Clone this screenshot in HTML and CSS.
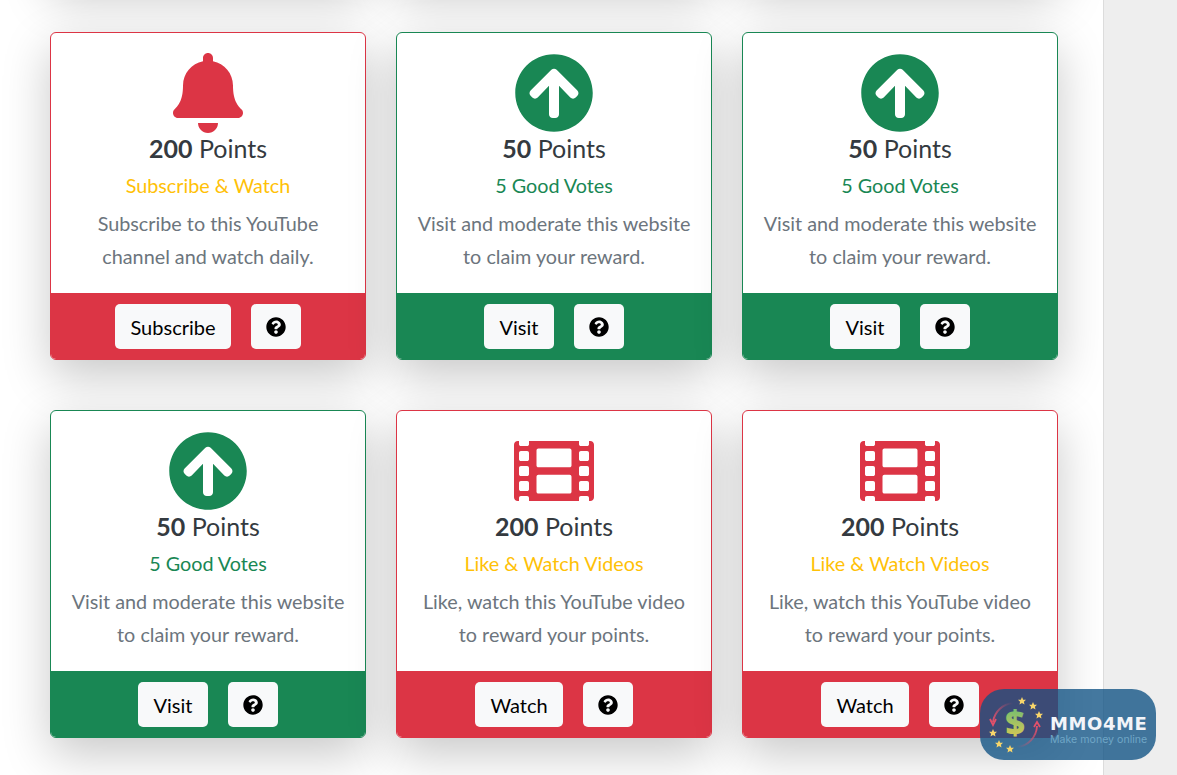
FILE: index.html
```html
<!DOCTYPE html>
<html lang="en">
<head>
    <meta charset="UTF-8">
    <title>Earn Points</title>
    <link rel="stylesheet" href="styles.css">
</head>
<body>
    <svg class="icon-defs" xmlns="http://www.w3.org/2000/svg">
        <symbol id="i-bell" viewBox="0 0 448 512"><path d="M224 512c35.32 0 63.97-28.65 63.97-64H160.03c0 35.35 28.65 64 63.97 64zm215.39-149.71c-19.32-20.76-55.47-51.99-55.47-154.29 0-77.7-54.48-139.9-127.94-155.16V32c0-17.67-14.32-32-31.98-32s-31.98 14.33-31.98 32v20.84C118.56 68.1 64.08 130.3 64.08 208c0 102.3-36.15 133.53-55.47 154.29-6 6.45-8.66 14.16-8.61 21.71.11 16.4 12.98 32 32.1 32h383.8c19.12 0 32-15.6 32.1-32 .05-7.55-2.61-15.27-8.61-21.71z"/></symbol>
        <symbol id="i-up" viewBox="0 0 512 512"><path d="M8 256C8 119 119 8 256 8s248 111 248 248-111 248-248 248S8 393 8 256zm143.6 28.9l72.4-75.5V392c0 13.3 10.7 24 24 24h16c13.3 0 24-10.7 24-24V209.4l72.4 75.5c9.3 9.7 24.8 9.9 34.3.4l10.9-11c9.4-9.4 9.4-24.6 0-33.9L273 107.7c-9.4-9.4-24.6-9.4-33.9 0L106.3 240.4c-9.4 9.4-9.4 24.6 0 33.9l10.9 11c9.6 9.5 25.1 9.3 34.4-.4z"/></symbol>
        <symbol id="i-film" viewBox="0 0 512 512"><path d="M488 64h-8v20c0 6.6-5.4 12-12 12h-40c-6.6 0-12-5.4-12-12V64H96v20c0 6.6-5.4 12-12 12H44c-6.6 0-12-5.4-12-12V64h-8C10.7 64 0 74.7 0 88v336c0 13.3 10.7 24 24 24h8v-20c0-6.6 5.4-12 12-12h40c6.6 0 12 5.4 12 12v20h320v-20c0-6.6 5.4-12 12-12h40c6.6 0 12 5.4 12 12v20h8c13.3 0 24-10.7 24-24V88c0-13.3-10.7-24-24-24zM96 372c0 6.6-5.4 12-12 12H44c-6.6 0-12-5.4-12-12v-40c0-6.6 5.4-12 12-12h40c6.6 0 12 5.4 12 12v40zm0-96c0 6.6-5.4 12-12 12H44c-6.6 0-12-5.4-12-12v-40c0-6.6 5.4-12 12-12h40c6.6 0 12 5.4 12 12v40zm0-96c0 6.6-5.4 12-12 12H44c-6.6 0-12-5.4-12-12v-40c0-6.6 5.4-12 12-12h40c6.6 0 12 5.4 12 12v40zm272 208c0 6.6-5.4 12-12 12H156c-6.6 0-12-5.4-12-12v-96c0-6.6 5.4-12 12-12h200c6.6 0 12 5.4 12 12v96zm0-168c0 6.6-5.4 12-12 12H156c-6.6 0-12-5.4-12-12v-96c0-6.6 5.4-12 12-12h200c6.6 0 12 5.4 12 12v96zm112 152c0 6.6-5.4 12-12 12h-40c-6.6 0-12-5.4-12-12v-40c0-6.6 5.4-12 12-12h40c6.6 0 12 5.4 12 12v40zm0-96c0 6.6-5.4 12-12 12h-40c-6.6 0-12-5.4-12-12v-40c0-6.6 5.4-12 12-12h40c6.6 0 12 5.4 12 12v40zm0-96c0 6.6-5.4 12-12 12h-40c-6.6 0-12-5.4-12-12v-40c0-6.6 5.4-12 12-12h40c6.6 0 12 5.4 12 12v40z"/></symbol>
        <symbol id="i-help" viewBox="0 0 512 512"><path d="M504 256c0 136.997-111.043 248-248 248S8 392.997 8 256C8 119.083 119.043 8 256 8s248 111.083 248 248zM262.655 90c-54.497 0-89.255 22.957-116.549 63.758-3.536 5.286-2.353 12.415 2.715 16.258l34.699 26.31c5.205 3.947 12.621 3.008 16.665-2.122 17.864-22.658 30.113-35.797 57.303-35.797 20.429 0 45.698 13.148 45.698 32.958 0 14.976-12.363 22.667-32.534 33.976C247.128 238.528 216 254.941 216 296v4c0 6.627 5.373 12 12 12h56c6.627 0 12-5.373 12-12v-1.333c0-28.462 83.186-29.647 83.186-106.667 0-58.002-60.165-102-116.531-102zM256 338c-25.365 0-46 20.635-46 46 0 25.364 20.635 46 46 46s46-20.636 46-46c0-25.365-20.635-46-46-46z"/></symbol>
    </svg>

    <div class="main">
        <div class="offer-grid">
            <!-- row above, scrolled out of view -->
            <div class="offer-card offer-card-off border-red"></div>
            <div class="offer-card offer-card-off border-green"></div>
            <div class="offer-card offer-card-off border-green"></div>

            <div class="offer-card border-red">
                <div class="offer-body">
                    <svg class="offer-icon bell text-red"><use href="#i-bell"/></svg>
                    <div class="offer-points"><b>200</b> Points</div>
                    <div class="offer-type text-yellow">Subscribe &amp; Watch</div>
                    <p class="offer-text">Subscribe to this YouTube<br>channel and watch daily.</p>
                </div>
                <div class="offer-footer bg-red">
                    <a class="btn">Subscribe</a>
                    <a class="btn btn-help"><svg class="help-icon"><use href="#i-help"/></svg></a>
                </div>
            </div>

            <div class="offer-card border-green">
                <div class="offer-body">
                    <svg class="offer-icon text-green"><use href="#i-up"/></svg>
                    <div class="offer-points"><b>50</b> Points</div>
                    <div class="offer-type text-green">5 Good Votes</div>
                    <p class="offer-text">Visit and moderate this website<br>to claim your reward.</p>
                </div>
                <div class="offer-footer bg-green">
                    <a class="btn">Visit</a>
                    <a class="btn btn-help"><svg class="help-icon"><use href="#i-help"/></svg></a>
                </div>
            </div>

            <div class="offer-card border-green">
                <div class="offer-body">
                    <svg class="offer-icon text-green"><use href="#i-up"/></svg>
                    <div class="offer-points"><b>50</b> Points</div>
                    <div class="offer-type text-green">5 Good Votes</div>
                    <p class="offer-text">Visit and moderate this website<br>to claim your reward.</p>
                </div>
                <div class="offer-footer bg-green">
                    <a class="btn">Visit</a>
                    <a class="btn btn-help"><svg class="help-icon"><use href="#i-help"/></svg></a>
                </div>
            </div>

            <div class="offer-card border-green">
                <div class="offer-body">
                    <svg class="offer-icon text-green"><use href="#i-up"/></svg>
                    <div class="offer-points"><b>50</b> Points</div>
                    <div class="offer-type text-green">5 Good Votes</div>
                    <p class="offer-text">Visit and moderate this website<br>to claim your reward.</p>
                </div>
                <div class="offer-footer bg-green">
                    <a class="btn">Visit</a>
                    <a class="btn btn-help"><svg class="help-icon"><use href="#i-help"/></svg></a>
                </div>
            </div>

            <div class="offer-card border-red">
                <div class="offer-body">
                    <svg class="offer-icon text-red"><use href="#i-film"/></svg>
                    <div class="offer-points"><b>200</b> Points</div>
                    <div class="offer-type text-yellow">Like &amp; Watch Videos</div>
                    <p class="offer-text">Like, watch this YouTube video<br>to reward your points.</p>
                </div>
                <div class="offer-footer bg-red">
                    <a class="btn">Watch</a>
                    <a class="btn btn-help"><svg class="help-icon"><use href="#i-help"/></svg></a>
                </div>
            </div>

            <div class="offer-card border-red">
                <div class="offer-body">
                    <svg class="offer-icon text-red"><use href="#i-film"/></svg>
                    <div class="offer-points"><b>200</b> Points</div>
                    <div class="offer-type text-yellow">Like &amp; Watch Videos</div>
                    <p class="offer-text">Like, watch this YouTube video<br>to reward your points.</p>
                </div>
                <div class="offer-footer bg-red">
                    <a class="btn">Watch</a>
                    <a class="btn btn-help"><svg class="help-icon"><use href="#i-help"/></svg></a>
                </div>
            </div>
        </div>
    </div>

    <!-- floating brand badge -->
    <div class="brand-badge">
        <svg class="brand-logo" viewBox="0 0 60 60" xmlns="http://www.w3.org/2000/svg">
            <defs>
                <linearGradient id="dollar" x1="0" y1="0" x2="0" y2="1">
                    <stop offset="0" stop-color="#55bb7a"/>
                    <stop offset="1" stop-color="#efc94c"/>
                </linearGradient>
                <linearGradient id="arc-a" x1="1" y1="0" x2="0" y2="1">
                    <stop offset="0" stop-color="#e4506a" stop-opacity="0"/>
                    <stop offset="1" stop-color="#e4506a"/>
                </linearGradient>
                <linearGradient id="arc-b" x1="0" y1="1" x2="1" y2="0">
                    <stop offset="0" stop-color="#e4506a" stop-opacity="0"/>
                    <stop offset="1" stop-color="#e4506a"/>
                </linearGradient>
                <polygon id="star" points="0,-4 1.2,-1.3 4,-1.2 1.9,.7 2.5,3.5 0,2 -2.5,3.5 -1.9,.7 -4,-1.2 -1.2,-1.3" fill="#f7d56b"/>
            </defs>
            <path d="M28 8 A22 22 0 0 0 8 27" fill="none" stroke="url(#arc-a)" stroke-width="1.8"/>
            <path d="M5 24 L8 30 L11 24" fill="none" stroke="#e4506a" stroke-width="1.8"/>
            <path d="M32 52 A22 22 0 0 0 52 31" fill="none" stroke="url(#arc-b)" stroke-width="1.8"/>
            <path d="M49 32 L52 27 L55 32" fill="none" stroke="#e4506a" stroke-width="1.8"/>
            <text class="brand-dollar" x="30" y="40" text-anchor="middle" fill="url(#dollar)">$</text>
            <use href="#star" x="37" y="6"/>
            <use href="#star" x="48" y="11"/>
            <use href="#star" x="54" y="20"/>
            <use href="#star" x="8" y="38"/>
            <use href="#star" x="14" y="49"/>
            <use href="#star" x="25" y="54"/>
        </svg>
        <div class="brand-text">
            <div class="brand-name">MMO4ME</div>
            <div class="brand-tag">Make money online</div>
        </div>
    </div>
</body>
</html>
```

FILE: styles.css
```css
* {
    margin: 0;
    padding: 0;
    box-sizing: border-box;
}

html, body {
    height: 100%;
    overflow: hidden;
}

body {
    font-family: Lato, "Noto Sans", sans-serif;
    background: #eeeeee;
    color: #343a40;
}

.icon-defs {
    display: none;
}

.main {
    width: 1104px;
    height: 100%;
    padding-left: 50px;
    background: #ffffff;
    border-right: 1px solid #dcdcdc;
    overflow: hidden;
}

.offer-grid {
    display: grid;
    grid-template-columns: repeat(3, 316px);
    grid-auto-rows: 328px;
    column-gap: 30px;
    row-gap: 50px;
    margin-top: -346px;
}

.offer-card {
    display: flex;
    flex-direction: column;
    border: 1px solid;
    border-radius: 6px;
    background: #ffffff;
    box-shadow: 0 16px 48px rgba(0,0,0,0.22);
    overflow: hidden;
}

.border-red {
    border-color: #dc3545;
}

.border-green {
    border-color: #198754;
}

.text-red {
    color: #dc3545;
    fill: #dc3545;
}

.text-green {
    color: #198754;
    fill: #198754;
}

.text-yellow {
    color: #ffc107;
}

.bg-red {
    background: #dc3545;
}

.bg-green {
    background: #198754;
}

.offer-body {
    flex: 1;
    padding: 20px 10px 0;
    text-align: center;
}

.offer-icon {
    display: block;
    width: 80px;
    height: 80px;
    margin: 0 auto;
}

.offer-icon.bell {
    width: 70px;
}

.offer-points {
    font-size: 25px;
    line-height: 30px;
}

.offer-type {
    margin-top: 7px;
    font-size: 19.8px;
    line-height: 30px;
}

.offer-text {
    margin-top: 7px;
    font-size: 19.8px;
    line-height: 33px;
    color: #6c757d;
}

.offer-footer {
    display: flex;
    justify-content: center;
    gap: 20px;
    height: 66px;
    padding-top: 11px;
}

.btn {
    display: flex;
    align-items: center;
    justify-content: center;
    height: 45px;
    min-width: 70px;
    padding: 0 15px;
    border-radius: 5px;
    background: #f8f9fa;
    color: #000000;
    font-size: 20px;
}

.btn-help {
    width: 50px;
    min-width: 0;
    padding: 0;
}

.help-icon {
    width: 20px;
    height: 20px;
    fill: #000000;
}

.brand-badge {
    position: absolute;
    left: 980px;
    top: 689px;
    width: 176px;
    height: 71px;
    display: flex;
    align-items: center;
    padding-left: 5px;
    border-radius: 24px;
    background: rgba(15,82,132,0.78);
}

.brand-logo {
    width: 60px;
    height: 60px;
    flex-shrink: 0;
}

.brand-dollar {
    font-family: "Open Sans", sans-serif;
    font-size: 34px;
    font-weight: 800;
}

.brand-text {
    margin-left: 5px;
    margin-top: 10px;
}

.brand-name {
    font-family: "DejaVu Sans", sans-serif;
    font-size: 18px;
    font-weight: 700;
    letter-spacing: 0.6px;
    line-height: 20px;
    color: #f3f5f9;
}

.brand-tag {
    font-family: Inter, sans-serif;
    font-size: 10.6px;
    line-height: 12px;
    color: #6fa6c6;
}
```
